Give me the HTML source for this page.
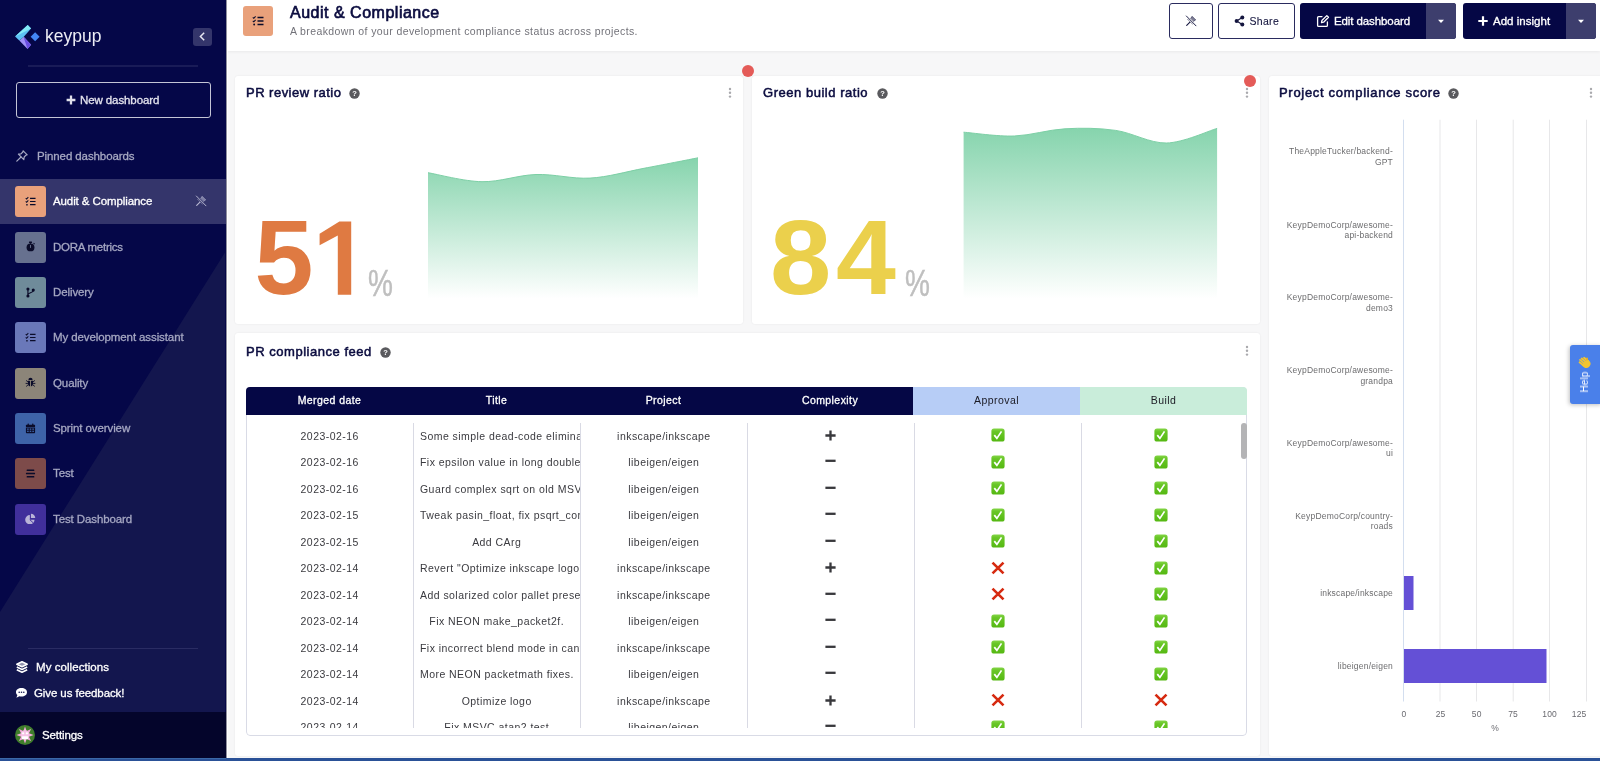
<!DOCTYPE html>
<html><head><meta charset="utf-8">
<style>
*{box-sizing:border-box;margin:0;padding:0}
html,body{width:1600px;height:761px;overflow:hidden;background:#f7f7f8;font-family:"Liberation Sans",sans-serif;}
.abs{position:absolute}
#side,#hdr,.card,#helptxt{will-change:transform}
#side{position:absolute;left:0;top:0;width:226px;height:758px;background:#050748;overflow:hidden}
#side .tri{position:absolute;left:0;top:0;width:225px;height:712px;background:#13164e;clip-path:polygon(225px 252.500px,225px 712px,0 712px,0 612px)}
#side .edge{position:absolute;left:225px;top:0;width:1px;height:758px;background:#03042e}
#strip{position:absolute;left:226px;top:0;width:2px;height:758px;background:#fff;border-left:1px solid rgba(8,8,40,.45);z-index:5}
#bbar{position:absolute;left:0;top:758px;width:1600px;height:3px;background:#2a5197}
#hdr{position:absolute;left:226px;top:0;width:1374px;height:51px;background:#fff;box-shadow:0 1px 3px rgba(0,0,0,.06)}
.card{position:absolute;background:#fff;border-radius:3px;box-shadow:0 0 2px rgba(0,0,0,.08)}
.ctitle{position:absolute;font-weight:normal;-webkit-text-stroke:0.5px #0b0c3f;font-size:13px;color:#0b0c3f;white-space:nowrap}
.t{position:absolute;white-space:nowrap;font-size:11.5px;-webkit-text-stroke:0.3px;letter-spacing:-0.1px}
.big{font-size:106px;font-weight:bold;line-height:116.6px;-webkit-text-stroke:0;letter-spacing:0}
.pct{font-size:37px;color:#bfbfbf;line-height:40.7px;-webkit-text-stroke:0.5px #bfbfbf;letter-spacing:0;transform:scaleX(0.757);transform-origin:0 0}
.th{font-size:10.5px;line-height:14px;letter-spacing:0.43px;-webkit-text-stroke:0.3px}
.td{font-size:10.5px;color:#3a3a3f;line-height:14px;-webkit-text-stroke:0;letter-spacing:0.45px}
.yl{font-size:8.5px;color:#6c6c6e;line-height:10.5px;-webkit-text-stroke:0;letter-spacing:0.2px}
.xl{font-size:8.5px;color:#6a6a70;line-height:12px;-webkit-text-stroke:0;letter-spacing:0.1px}
</style></head><body>
<div id="side">
<div class="tri"></div>
<!-- logo -->
<svg class="abs" style="left:14px;top:23px" width="28" height="28" viewBox="0 0 28 28">
<polygon points="5.300,17.600 9.800,13.800 17.100,21.650 13.500,25.900" fill="#a092f6"/>
<polygon points="9.600,13.900 17.100,21.650 13.500,25.900" fill="#6a4de0"/>
<polygon points="1.100,13.500 13.700,1.900 17.100,5.400 9.800,13.800 5.300,17.600" fill="#5cc0f5"/>
<polygon points="1.100,13.500 13.700,1.900 17.100,5.400" fill="#83eaf7"/>
<polygon points="16.600,13.800 21.100,9.300 25.600,13.800 21.100,18.300" fill="#4486f5"/>
</svg>
<div class="t" id="logot" style="left:45px;top:25.300px;font-size:17.500px;color:#ececf4;letter-spacing:0;line-height:22px;-webkit-text-stroke:0">keypup</div>
<div class="abs" style="left:193px;top:27.500px;width:19px;height:18.500px;border-radius:3px;background:#34356b"></div>
<svg class="abs" style="left:193px;top:27px" width="19" height="19" viewBox="0 0 19 19"><path d="M11.2 5.8 L7.4 9.5 L11.2 13.2" fill="none" stroke="#e8e8f2" stroke-width="1.5"/></svg>
<div class="abs" style="left:28px;top:65px;width:170px;height:2px;background:#191b57"></div>
<!-- new dashboard -->
<div class="abs" style="left:16px;top:82px;width:195px;height:36px;border:1px solid #c4c5d6;border-radius:3px"></div>
<svg class="abs" style="left:66px;top:95px" width="10" height="10" viewBox="0 0 10 10"><path d="M5 .6V9.400M.6 5H9.400" stroke="#e0e0ea" stroke-width="2.300"/></svg>
<div class="t" id="newd" style="left:80px;top:93px;color:#e4e4ee;line-height:14px">New dashboard</div>
<!-- pinned -->
<svg class="abs" style="left:15px;top:149px" width="14" height="14" viewBox="0 0 14 14"><g fill="none" stroke="#a8aac4" stroke-width="1.2" stroke-linejoin="round" stroke-linecap="round"><path d="M8.2 1.8 L12.2 5.8 L11 6.2 L9.2 8 L8.8 10.6 L3.4 5.2 L6 4.8 L7.8 3 Z"/><path d="M6 8 L1.8 12.2"/></g></svg>
<div class="t" id="pinned" style="left:37px;top:149px;color:#a6a8c2;line-height:14px">Pinned dashboards</div>
<!-- active row -->
<div class="abs" style="left:0;top:179px;width:226px;height:45px;background:#34356b"></div>
<div class="abs" style="left:15px;top:186.2px;width:31px;height:31px;border-radius:3px;background:#e9a17b"></div>
<svg class="abs" style="left:24.600px;top:195.8px" width="11" height="11" viewBox="0 0 12 12"><g stroke="#0b0c2a" stroke-width="1.3" fill="none"><path d="M5.500 2.500H11.500M5.500 6H11.500M5.500 9.500H11.500"/><path d="M.8 2.300 L1.800 3.300 L3.600 1.300" stroke-width="1.100"/><path d="M.8 5.800 L1.800 6.800 L3.600 4.800" stroke-width="1.100"/></g><rect x="1.200" y="8.600" width="1.900" height="1.900" rx=".9" fill="#0b0c2a"/></svg>
<div class="t sitem" style="left:53px;top:194px;color:#fff;line-height:14px">Audit &amp; Compliance</div>
<div class="abs" style="left:15px;top:231.7px;width:31px;height:31px;border-radius:3px;background:#67718f"></div>
<svg class="abs" style="left:24.600px;top:241.3px" width="11" height="11" viewBox="0 0 12 12"><circle cx="6" cy="7" r="4.300" fill="#0b0c2a"/><rect x="4.300" y=".6" width="3.400" height="1.500" rx=".4" fill="#0b0c2a"/><rect x="5.400" y="1.500" width="1.200" height="1.600" fill="#0b0c2a"/><rect x="5.500" y="4.300" width="1" height="3.200" fill="#67718f"/><rect x="9" y="2.300" width="1.800" height="1" transform="rotate(45 9.9 2.800)" fill="#0b0c2a"/></svg>
<div class="t sitem" style="left:53px;top:239.5px;color:#a5a7c2;line-height:14px;letter-spacing:-0.26px">DORA metrics</div>
<div class="abs" style="left:15px;top:277.2px;width:31px;height:31px;border-radius:3px;background:#6f8b9a"></div>
<svg class="abs" style="left:24.600px;top:286.8px" width="11" height="11" viewBox="0 0 12 12"><g fill="#0b0c2a"><circle cx="3.200" cy="2.200" r="1.700"/><circle cx="3.200" cy="9.800" r="1.700"/><circle cx="9" cy="3.400" r="1.700"/></g><path d="M3.200 2.500V9.500M9 3.800C9 6.600 3.200 6 3.200 8.500" stroke="#0b0c2a" stroke-width="1.300" fill="none"/></svg>
<div class="t sitem" style="left:53px;top:285px;color:#a5a7c2;line-height:14px">Delivery</div>
<div class="abs" style="left:15px;top:322.2px;width:31px;height:31px;border-radius:3px;background:#6a78b9"></div>
<svg class="abs" style="left:24.600px;top:331.8px" width="11" height="11" viewBox="0 0 12 12"><g stroke="#0b0c2a" stroke-width="1.3" fill="none"><path d="M5.500 2.500H11.500M5.500 6H11.500M5.500 9.500H11.500"/><path d="M.8 2.300 L1.800 3.300 L3.600 1.300" stroke-width="1.100"/><path d="M.8 5.800 L1.800 6.800 L3.600 4.800" stroke-width="1.100"/></g><rect x="1.200" y="8.600" width="1.900" height="1.900" rx=".9" fill="#0b0c2a"/></svg>
<div class="t sitem" style="left:53px;top:330px;color:#a5a7c2;line-height:14px">My development assistant</div>
<div class="abs" style="left:15px;top:367.7px;width:31px;height:31px;border-radius:3px;background:#8c8579"></div>
<svg class="abs" style="left:24.600px;top:377.3px" width="11" height="11" viewBox="0 0 12 12"><g fill="#0b0c2a"><path d="M3.700 3.200a2.300 2.300 0 0 1 4.600 0z"/><path d="M3.200 4h2.300v6.300a3 3 0 0 1-2.300-3z"/><path d="M8.800 4H6.500v6.300a3 3 0 0 0 2.300-3z"/></g><g stroke="#0b0c2a" stroke-width="1" fill="none"><path d="M3.200 5.200L1.200 3.800M3.200 7H.7M3.300 8.600L1.300 10.300M8.800 5.200L10.800 3.800M8.800 7H11.300M8.700 8.600L10.700 10.300"/></g></svg>
<div class="t sitem" style="left:53px;top:375.5px;color:#a5a7c2;line-height:14px">Quality</div>
<div class="abs" style="left:15px;top:413.2px;width:31px;height:31px;border-radius:3px;background:#3e63a8"></div>
<svg class="abs" style="left:24.600px;top:422.8px" width="11" height="11" viewBox="0 0 12 12"><g fill="#0b0c2a"><rect x="1" y="2" width="10" height="2.300" rx=".6"/><rect x="2.800" y=".6" width="1.400" height="2.400" rx=".4"/><rect x="7.800" y=".6" width="1.400" height="2.400" rx=".4"/><path d="M1 5h10v5.400a.8.800 0 0 1-.8.800H1.800a.8.800 0 0 1-.8-.8z"/></g><g fill="#3e63a8"><rect x="2.300" y="6" width="1.700" height="1.400"/><rect x="5.150" y="6" width="1.700" height="1.400"/><rect x="8" y="6" width="1.700" height="1.400"/><rect x="2.300" y="8.400" width="1.700" height="1.400"/><rect x="5.150" y="8.400" width="1.700" height="1.400"/><rect x="8" y="8.400" width="1.700" height="1.400"/></g></svg>
<div class="t sitem" style="left:53px;top:421px;color:#a5a7c2;line-height:14px">Sprint overview</div>
<div class="abs" style="left:15px;top:458.2px;width:31px;height:31px;border-radius:3px;background:#7d4b4a"></div>
<svg class="abs" style="left:24.600px;top:467.8px" width="11" height="11" viewBox="0 0 12 12"><g fill="#0b0c2a"><rect x="1.800" y="1.600" width="8.400" height="1.800" rx=".6"/><rect x="1" y="5.100" width="10" height="1.800" rx=".6"/><rect x="1.800" y="8.600" width="8.400" height="1.800" rx=".6"/></g></svg>
<div class="t sitem" style="left:53px;top:466px;color:#a5a7c2;line-height:14px">Test</div>
<div class="abs" style="left:15px;top:503.7px;width:31px;height:31px;border-radius:3px;background:#402f9b"></div>
<svg class="abs" style="left:24.600px;top:513.3px" width="11" height="11" viewBox="0 0 12 12"><g fill="#b9b4d8"><path d="M5.300 1.600V6.700H10.400A5.100 5.100 0 1 1 5.300 1.600z" transform="translate(0 .6)"/><path d="M6.500.8A4.700 4.700 0 0 1 11.200 5.500H6.500z"/></g><path d="M5.300 7.300L9 10.800" stroke="#402f9b" stroke-width="1"/></svg>
<div class="t sitem" style="left:53px;top:511.5px;color:#a5a7c2;line-height:14px">Test Dashboard</div>
<svg class="abs" style="left:194.200px;top:194.200px" width="14" height="14" viewBox="0 0 14 14"><g transform="translate(7 7) scale(.86) translate(-7 -7)"><path d="M8.300 1.600 L12.400 5.700 L11.300 6.400 L9.500 7.900 L9.100 10.800 L3.200 4.900 L6.100 4.500 L7.600 2.700 Z" fill="#b9bad3" fill-opacity=".55" stroke="#b9bad3" stroke-width=".7" stroke-linejoin="round"/><path d="M5.800 8.200 L2 12" stroke="#b9bad3" stroke-width="1.300" stroke-linecap="round"/><path d="M1.600 1.200 L12.800 12.600" stroke="#34356b" stroke-width="2.600"/><path d="M1.600 1.200 L12.800 12.600" stroke="#b9bad3" stroke-width="1.100" stroke-linecap="round"/></g></svg>
<div class="abs" style="left:28px;top:647.500px;width:170px;height:1px;background:#2a2c63"></div>
<!-- collections -->
<svg class="abs" style="left:15px;top:660px" width="14" height="14" viewBox="0 0 14 14"><g fill="none" stroke="#fff" stroke-width="1.500" stroke-linejoin="round"><path d="M7 1.800 L12.200 4.300 L7 6.800 L1.800 4.300 Z" fill="#fff" fill-opacity=".55"/><path d="M1.800 7 L7 9.500 L12.200 7"/><path d="M1.800 9.700 L7 12.200 L12.200 9.700"/></g></svg>
<div class="t" id="coll" style="left:36px;top:660px;color:#fff;line-height:14px;letter-spacing:0.06px">My collections</div>
<svg class="abs" style="left:15px;top:687px" width="13" height="12" viewBox="0 0 13 12"><path d="M6.5 1 C3.2 1 1 2.9 1 5.2 C1 6.3 1.5 7.3 2.4 8 L1.4 10.8 L4.4 9.2 C5 9.4 5.7 9.5 6.5 9.5 C9.8 9.5 12 7.6 12 5.2 C12 2.9 9.8 1 6.5 1 Z" fill="#fff"/><circle cx="4.2" cy="5.3" r=".8" fill="#13164f"/><circle cx="6.5" cy="5.3" r=".8" fill="#13164f"/><circle cx="8.8" cy="5.3" r=".8" fill="#13164f"/></svg>
<div class="t" id="feed" style="left:34px;top:686px;color:#fff;line-height:14px">Give us feedback!</div>
<!-- settings -->
<div class="abs" style="left:0;top:712px;width:226px;height:46px;background:#04052b"></div>
<svg class="abs" style="left:14px;top:724px" width="22" height="22" viewBox="0 0 22 22"><circle cx="11" cy="11" r="10" fill="#3f7d2b"/><polygon points="11.00,2.40 12.65,7.03 17.08,4.92 14.97,9.35 19.60,11.00 14.97,12.65 17.08,17.08 12.65,14.97 11.00,19.60 9.35,14.97 4.92,17.08 7.03,12.65 2.40,11.00 7.03,9.35 4.92,4.92 9.35,7.03" fill="#f3a9dc"/><circle cx="11" cy="10.500" r="4.300" fill="#f6c3e6"/><circle cx="9.100" cy="9.300" r="1.150" fill="#fff"/><circle cx="12.900" cy="9.300" r="1.150" fill="#fff"/><rect x="7.800" y="12.200" width="6.400" height="3" rx=".8" fill="#fff"/></svg>
<div class="t" id="sett" style="left:42px;top:728px;color:#fff;line-height:14px">Settings</div>

</div>
<div id="strip"></div>
<div id="hdr">
<div class="abs" style="left:17px;top:6px;width:30px;height:30px;border-radius:3px;background:#e9a17b"></div>
<svg class="abs" style="left:26px;top:15px" width="12" height="12" viewBox="0 0 12 12"><g stroke="#0b0c2a" stroke-width="1.3" fill="none"><path d="M5.500 2.500H11.500M5.500 6H11.500M5.500 9.500H11.500"/><path d="M.8 2.300 L1.800 3.300 L3.600 1.300" stroke-width="1.100"/><path d="M.8 5.800 L1.800 6.800 L3.600 4.800" stroke-width="1.100"/></g><rect x="1.200" y="8.600" width="1.900" height="1.900" rx=".9" fill="#0b0c2a"/></svg>
<div class="t" id="htitle" style="left:64px;top:1.7px;font-size:16px;font-weight:normal;color:#0b0c3f;line-height:22px;-webkit-text-stroke:0.65px #0b0c3f;letter-spacing:0.51px">Audit &amp; Compliance</div>
<div class="t" id="hsub" style="left:64px;top:23.5px;font-size:10.5px;color:#727279;line-height:14px;-webkit-text-stroke:0;letter-spacing:0.39px">A breakdown of your development compliance status across projects.</div>
<!-- buttons -->
<div class="abs" style="left:943px;top:3px;width:44px;height:36px;border:1px solid #2a2b5e;border-radius:3px;background:#fff"></div>
<svg class="abs" style="left:958px;top:14.200px" width="14" height="14" viewBox="0 0 14 14"><g transform="translate(7 7) scale(.86) translate(-7 -7)"><path d="M8.300 1.600 L12.400 5.700 L11.300 6.400 L9.500 7.900 L9.100 10.800 L3.200 4.900 L6.100 4.500 L7.600 2.700 Z" fill="#15163f" fill-opacity=".55" stroke="#15163f" stroke-width=".7" stroke-linejoin="round"/><path d="M5.800 8.200 L2 12" stroke="#15163f" stroke-width="1.300" stroke-linecap="round"/><path d="M1.600 1.200 L12.800 12.600" stroke="#fff" stroke-width="2.600"/><path d="M1.600 1.200 L12.800 12.600" stroke="#15163f" stroke-width="1.100" stroke-linecap="round"/></g></svg>
<div class="abs" style="left:992px;top:3px;width:77px;height:36px;border:1px solid #2a2b5e;border-radius:3px;background:#fff"></div>
<svg class="abs" style="left:1008px;top:15px" width="11" height="12" viewBox="0 0 11 12"><g fill="#15163f"><circle cx="8.300" cy="2.400" r="2"/><circle cx="2.600" cy="6" r="2"/><circle cx="8.300" cy="9.600" r="2"/></g><path d="M8.300 2.400L2.600 6L8.300 9.600" stroke="#15163f" stroke-width="1.200" fill="none"/></svg>
<div class="t" id="share" style="left:1023.400px;top:14.300px;color:#15163f;line-height:14px;-webkit-text-stroke:0.1px;font-size:10.500px;letter-spacing:0.35px">Share</div>
<div class="abs" style="left:1074px;top:3px;width:156px;height:36px;border-radius:3px;background:#050745"></div>
<div class="abs" style="left:1200px;top:3px;width:30px;height:36px;border-radius:0 3px 3px 0;background:#3d3e6d"></div>
<svg class="abs" style="left:1090px;top:14px" width="14" height="14" viewBox="0 0 14 14"><g fill="none" stroke="#fff" stroke-width="1.300" stroke-linejoin="round" stroke-linecap="round"><path d="M6 2.600H2.600a1 1 0 0 0-1 1V11.400a1 1 0 0 0 1 1H10.400a1 1 0 0 0 1-1V8"/><path d="M5.500 8.600 L5.900 6.500 L10.800 1.600 L12.500 3.300 L7.600 8.200 Z"/></g></svg>
<div class="t" id="editd" style="left:1108px;top:14px;color:#fff;line-height:14px">Edit dashboard</div>
<svg class="abs" style="left:1211px;top:19px" width="8" height="5" viewBox="0 0 8 5"><path d="M1 .8H7L4 4Z" fill="#fff"/></svg>
<div class="abs" style="left:1237px;top:3px;width:133px;height:36px;border-radius:3px;background:#050745"></div>
<div class="abs" style="left:1340px;top:3px;width:30px;height:36px;border-radius:0 3px 3px 0;background:#3d3e6d"></div>
<svg class="abs" style="left:1252px;top:16px" width="10" height="10" viewBox="0 0 10 10"><path d="M5 .3V9.700M.3 5H9.700" stroke="#fff" stroke-width="2.200"/></svg>
<div class="t" id="addi" style="left:1267px;top:14px;color:#fff;line-height:14px;letter-spacing:0.02px">Add insight</div>
<svg class="abs" style="left:1351px;top:19px" width="8" height="5" viewBox="0 0 8 5"><path d="M1 .8H7L4 4Z" fill="#fff"/></svg>

</div>
<div class="card" id="c1" style="left:235px;top:76px;width:508px;height:248px"><div class="ctitle" id="t1" style="left:11px;top:8px;line-height:18px;letter-spacing:0.48px">PR review ratio</div><svg class="abs" style="left:113.900px;top:12.300px" width="11" height="11" viewBox="0 0 11 11"><circle cx="5.500" cy="5.500" r="5.200" fill="#5a5a5e"/><text x="5.500" y="8.200" font-family="Liberation Sans" font-weight="bold" font-size="7.500" fill="#fff" text-anchor="middle">?</text></svg><svg class="abs" style="left:493px;top:11px" width="4" height="12" viewBox="0 0 4 12"><g fill="#a9a9ad"><circle cx="2" cy="2" r="1.200"/><circle cx="2" cy="5.800" r="1.200"/><circle cx="2" cy="9.600" r="1.200"/></g></svg>
<div class="t big" style="left:19.4px;top:123.3px;color:#df7a42">5</div>
<svg class="abs" style="left:0;top:0" width="200" height="248"><polygon points="116.2,145.6 116.2,218.8 102.8,218.8 102.8,159.6 84.6,169.2 84.6,157.7 104.4,145.6" fill="#df7a42"/></svg>
<div class="t pct" style="left:132.8px;top:187.5px">%</div>
<svg class="abs" style="left:0;top:0" width="508" height="248"><defs><linearGradient id="g1" x1="0" y1="0" x2="0" y2="1"><stop offset="0" stop-color="#86d4ad"/><stop offset="1" stop-color="#ffffff"/></linearGradient></defs><path d="M193.0,96.7 C202.0,98.2 229.0,105.4 247.0,105.7 C265.0,106.0 283.0,99.1 301.0,98.5 C319.0,97.9 337.0,103.1 355.0,102.1 C373.0,101.1 391.0,95.7 409.0,92.3 C427.0,88.9 454.0,83.6 463.0,81.8 L463.0,222.5 L193.0,222.5 Z" fill="url(#g1)"/><path d="M193.0,96.7 C202.0,98.2 229.0,105.4 247.0,105.7 C265.0,106.0 283.0,99.1 301.0,98.5 C319.0,97.9 337.0,103.1 355.0,102.1 C373.0,101.1 391.0,95.7 409.0,92.3 C427.0,88.9 454.0,83.6 463.0,81.8" fill="none" stroke="#7ccfa5" stroke-width="1"/></svg></div>
<div class="card" id="c2" style="left:752px;top:76px;width:508px;height:248px"><div class="ctitle" id="t2" style="left:11px;top:8px;line-height:18px;letter-spacing:0.53px">Green build ratio</div><svg class="abs" style="left:124.700px;top:12.300px" width="11" height="11" viewBox="0 0 11 11"><circle cx="5.500" cy="5.500" r="5.200" fill="#5a5a5e"/><text x="5.500" y="8.200" font-family="Liberation Sans" font-weight="bold" font-size="7.500" fill="#fff" text-anchor="middle">?</text></svg><svg class="abs" style="left:493px;top:11px" width="4" height="12" viewBox="0 0 4 12"><g fill="#a9a9ad"><circle cx="2" cy="2" r="1.200"/><circle cx="2" cy="5.800" r="1.200"/><circle cx="2" cy="9.600" r="1.200"/></g></svg>
<div class="t big" style="left:17.8px;top:123.0px;color:#ebd04c;transform:scaleX(1.04);transform-origin:0 0">8</div>
<div class="t big" style="left:84.1px;top:123.3px;color:#ebd04c;transform:scaleX(1.016);transform-origin:0 0">4</div>
<div class="t pct" style="left:152.5px;top:187.5px">%</div>
<svg class="abs" style="left:0;top:0" width="508" height="248"><defs><linearGradient id="g2" x1="0" y1="0" x2="0" y2="1"><stop offset="0" stop-color="#86d4ad"/><stop offset="1" stop-color="#ffffff"/></linearGradient></defs><path d="M211.6,56.2 C220.1,56.8 245.4,60.6 262.3,60.0 C279.2,59.4 296.1,53.7 313.0,52.8 C329.9,51.8 346.8,52.0 363.7,54.4 C380.6,56.8 397.5,67.3 414.4,67.0 C431.3,66.7 456.6,54.8 465.1,52.4 L465.1,222.5 L211.6,222.5 Z" fill="url(#g2)"/><path d="M211.6,56.2 C220.1,56.8 245.4,60.6 262.3,60.0 C279.2,59.4 296.1,53.7 313.0,52.8 C329.9,51.8 346.8,52.0 363.7,54.4 C380.6,56.8 397.5,67.3 414.4,67.0 C431.3,66.7 456.6,54.8 465.1,52.4" fill="none" stroke="#7ccfa5" stroke-width="1"/></svg></div>
<div class="card" id="c3" style="left:235px;top:333px;width:1025px;height:423px"><div class="ctitle" id="t3" style="left:11px;top:10px;line-height:18px;letter-spacing:0.53px">PR compliance feed</div><svg class="abs" style="left:145.2px;top:13.7px" width="11" height="11" viewBox="0 0 11 11"><circle cx="5.500" cy="5.500" r="5.200" fill="#5a5a5e"/><text x="5.500" y="8.200" font-family="Liberation Sans" font-weight="bold" font-size="7.500" fill="#fff" text-anchor="middle">?</text></svg><svg class="abs" style="left:1009.5px;top:12.4px" width="4" height="12" viewBox="0 0 4 12"><g fill="#a9a9ad"><circle cx="2" cy="2" r="1.200"/><circle cx="2" cy="5.800" r="1.200"/><circle cx="2" cy="9.600" r="1.200"/></g></svg>
<div class="abs" style="left:11px;top:54px;width:1001px;height:349px;border-radius:4px;overflow:hidden" id="tbl"><div class="abs" style="left:0;top:0;width:1001px;height:349px;border:1px solid #d9dbe6;border-radius:4px"></div><div class="abs" style="left:1px;top:1px;width:999px;height:347px">
<div class="abs" style="left:-1px;top:-1px;width:667px;height:28px;background:#050745"></div>
<div class="abs" style="left:666px;top:-1px;width:167px;height:28px;background:#b7cdf6"></div>
<div class="abs" style="left:833px;top:-1px;width:168px;height:28px;background:#c9edda"></div>
<div class="t th" style="left:-1px;top:5.200px;width:167px;text-align:center;color:#fff;">Merged date</div>
<div class="t th" style="left:166px;top:5.200px;width:167px;text-align:center;color:#fff;">Title</div>
<div class="t th" style="left:333px;top:5.200px;width:167px;text-align:center;color:#fff;">Project</div>
<div class="t th" style="left:500px;top:5.200px;width:166px;text-align:center;color:#fff;">Complexity</div>
<div class="t th" style="left:666px;top:5.200px;width:167px;text-align:center;color:#1b1b24;-webkit-text-stroke:0;">Approval</div>
<div class="t th" style="left:833px;top:5.200px;width:167px;text-align:center;color:#1b1b24;-webkit-text-stroke:0;">Build</div>
<div class="abs" style="left:0;top:0;width:999px;height:339.5px;overflow:hidden">
<div class="abs" style="left:165.7px;top:34.5px;width:1px;height:320px;background:#d9dae4"></div>
<div class="abs" style="left:332.8px;top:34.5px;width:1px;height:320px;background:#d9dae4"></div>
<div class="abs" style="left:499.9px;top:34.5px;width:1px;height:320px;background:#d9dae4"></div>
<div class="abs" style="left:667.0px;top:34.5px;width:1px;height:320px;background:#d9dae4"></div>
<div class="abs" style="left:834.1px;top:34.5px;width:1px;height:320px;background:#d9dae4"></div>
<div class="t td" style="left:-0.9px;top:40.5px;width:167.100px;text-align:center">2023-02-16</div>
<div class="t td" style="left:166.7px;top:40.5px;width:166.0px;overflow:hidden"><span style="display:inline-block;min-width:100%;box-sizing:border-box;padding:0 6.300px;text-align:center">Some simple dead-code elimination</span></div>
<div class="t td" style="left:333.3px;top:40.5px;width:167.100px;text-align:center">inkscape/inkscape</div>
<div class="abs" style="left:578.3px;top:41.5px"><svg width="11" height="11" viewBox="0 0 11 11" style="display:block"><path d="M5.500 .4V10.600M.4 5.500H10.600" stroke="#38383c" stroke-width="2.300"/></svg></div>
<div class="abs" style="left:743.8px;top:40.0px"><svg width="14" height="14" viewBox="0 0 14 14" style="display:block"><defs><linearGradient id="ck" x1="0" y1="0" x2="0" y2="1"><stop offset="0" stop-color="#84d548"/><stop offset=".25" stop-color="#68c626"/><stop offset="1" stop-color="#55b812"/></linearGradient></defs><rect x=".4" y=".4" width="13.200" height="13.200" rx="2.600" fill="url(#ck)"/><path d="M3.300 7.100 L5.900 10.400 L10.500 3.400" fill="none" stroke="#fff" stroke-width="1.700" stroke-linecap="butt" stroke-linejoin="miter"/></svg></div>
<div class="abs" style="left:906.7px;top:40.0px"><svg width="14" height="14" viewBox="0 0 14 14" style="display:block"><rect x=".4" y=".4" width="13.200" height="13.200" rx="2.600" fill="url(#ck)"/><path d="M3.300 7.100 L5.900 10.400 L10.500 3.400" fill="none" stroke="#fff" stroke-width="1.700" stroke-linecap="butt" stroke-linejoin="miter"/></svg></div>
<div class="t td" style="left:-0.9px;top:67.0px;width:167.100px;text-align:center">2023-02-16</div>
<div class="t td" style="left:166.7px;top:67.0px;width:166.0px;overflow:hidden"><span style="display:inline-block;min-width:100%;box-sizing:border-box;padding:0 6.300px;text-align:center">Fix epsilon value in long double test</span></div>
<div class="t td" style="left:333.3px;top:67.0px;width:167.100px;text-align:center">libeigen/eigen</div>
<div class="abs" style="left:578.3px;top:68.0px"><svg width="11" height="11" viewBox="0 0 11 11" style="display:block"><path d="M.4 4.800H10.600" stroke="#38383c" stroke-width="2.300"/></svg></div>
<div class="abs" style="left:743.8px;top:66.5px"><svg width="14" height="14" viewBox="0 0 14 14" style="display:block"><rect x=".4" y=".4" width="13.200" height="13.200" rx="2.600" fill="url(#ck)"/><path d="M3.300 7.100 L5.900 10.400 L10.500 3.400" fill="none" stroke="#fff" stroke-width="1.700" stroke-linecap="butt" stroke-linejoin="miter"/></svg></div>
<div class="abs" style="left:906.7px;top:66.5px"><svg width="14" height="14" viewBox="0 0 14 14" style="display:block"><rect x=".4" y=".4" width="13.200" height="13.200" rx="2.600" fill="url(#ck)"/><path d="M3.300 7.100 L5.900 10.400 L10.500 3.400" fill="none" stroke="#fff" stroke-width="1.700" stroke-linecap="butt" stroke-linejoin="miter"/></svg></div>
<div class="t td" style="left:-0.9px;top:93.5px;width:167.100px;text-align:center">2023-02-16</div>
<div class="t td" style="left:166.7px;top:93.5px;width:166.0px;overflow:hidden"><span style="display:inline-block;min-width:100%;box-sizing:border-box;padding:0 6.300px;text-align:center">Guard complex sqrt on old MSVC compilers</span></div>
<div class="t td" style="left:333.3px;top:93.5px;width:167.100px;text-align:center">libeigen/eigen</div>
<div class="abs" style="left:578.3px;top:94.5px"><svg width="11" height="11" viewBox="0 0 11 11" style="display:block"><path d="M.4 4.800H10.600" stroke="#38383c" stroke-width="2.300"/></svg></div>
<div class="abs" style="left:743.8px;top:93.0px"><svg width="14" height="14" viewBox="0 0 14 14" style="display:block"><rect x=".4" y=".4" width="13.200" height="13.200" rx="2.600" fill="url(#ck)"/><path d="M3.300 7.100 L5.900 10.400 L10.500 3.400" fill="none" stroke="#fff" stroke-width="1.700" stroke-linecap="butt" stroke-linejoin="miter"/></svg></div>
<div class="abs" style="left:906.7px;top:93.0px"><svg width="14" height="14" viewBox="0 0 14 14" style="display:block"><rect x=".4" y=".4" width="13.200" height="13.200" rx="2.600" fill="url(#ck)"/><path d="M3.300 7.100 L5.900 10.400 L10.500 3.400" fill="none" stroke="#fff" stroke-width="1.700" stroke-linecap="butt" stroke-linejoin="miter"/></svg></div>
<div class="t td" style="left:-0.9px;top:120.0px;width:167.100px;text-align:center">2023-02-15</div>
<div class="t td" style="left:166.7px;top:120.0px;width:166.0px;overflow:hidden"><span style="display:inline-block;min-width:100%;box-sizing:border-box;padding:0 6.300px;text-align:center">Tweak pasin_float, fix psqrt_complex</span></div>
<div class="t td" style="left:333.3px;top:120.0px;width:167.100px;text-align:center">libeigen/eigen</div>
<div class="abs" style="left:578.3px;top:121.0px"><svg width="11" height="11" viewBox="0 0 11 11" style="display:block"><path d="M.4 4.800H10.600" stroke="#38383c" stroke-width="2.300"/></svg></div>
<div class="abs" style="left:743.8px;top:119.5px"><svg width="14" height="14" viewBox="0 0 14 14" style="display:block"><rect x=".4" y=".4" width="13.200" height="13.200" rx="2.600" fill="url(#ck)"/><path d="M3.300 7.100 L5.900 10.400 L10.500 3.400" fill="none" stroke="#fff" stroke-width="1.700" stroke-linecap="butt" stroke-linejoin="miter"/></svg></div>
<div class="abs" style="left:906.7px;top:119.5px"><svg width="14" height="14" viewBox="0 0 14 14" style="display:block"><rect x=".4" y=".4" width="13.200" height="13.200" rx="2.600" fill="url(#ck)"/><path d="M3.300 7.100 L5.900 10.400 L10.500 3.400" fill="none" stroke="#fff" stroke-width="1.700" stroke-linecap="butt" stroke-linejoin="miter"/></svg></div>
<div class="t td" style="left:-0.9px;top:146.5px;width:167.100px;text-align:center">2023-02-15</div>
<div class="t td" style="left:166.7px;top:146.5px;width:166.0px;overflow:hidden"><span style="display:inline-block;min-width:100%;box-sizing:border-box;padding:0 6.300px;text-align:center">Add CArg</span></div>
<div class="t td" style="left:333.3px;top:146.5px;width:167.100px;text-align:center">libeigen/eigen</div>
<div class="abs" style="left:578.3px;top:147.5px"><svg width="11" height="11" viewBox="0 0 11 11" style="display:block"><path d="M.4 4.800H10.600" stroke="#38383c" stroke-width="2.300"/></svg></div>
<div class="abs" style="left:743.8px;top:146.0px"><svg width="14" height="14" viewBox="0 0 14 14" style="display:block"><rect x=".4" y=".4" width="13.200" height="13.200" rx="2.600" fill="url(#ck)"/><path d="M3.300 7.100 L5.900 10.400 L10.500 3.400" fill="none" stroke="#fff" stroke-width="1.700" stroke-linecap="butt" stroke-linejoin="miter"/></svg></div>
<div class="abs" style="left:906.7px;top:146.0px"><svg width="14" height="14" viewBox="0 0 14 14" style="display:block"><rect x=".4" y=".4" width="13.200" height="13.200" rx="2.600" fill="url(#ck)"/><path d="M3.300 7.100 L5.900 10.400 L10.500 3.400" fill="none" stroke="#fff" stroke-width="1.700" stroke-linecap="butt" stroke-linejoin="miter"/></svg></div>
<div class="t td" style="left:-0.9px;top:173.0px;width:167.100px;text-align:center">2023-02-14</div>
<div class="t td" style="left:166.7px;top:173.0px;width:166.0px;overflow:hidden"><span style="display:inline-block;min-width:100%;box-sizing:border-box;padding:0 6.300px;text-align:center">Revert "Optimize inkscape logo"</span></div>
<div class="t td" style="left:333.3px;top:173.0px;width:167.100px;text-align:center">inkscape/inkscape</div>
<div class="abs" style="left:578.3px;top:174.0px"><svg width="11" height="11" viewBox="0 0 11 11" style="display:block"><path d="M5.500 .4V10.600M.4 5.500H10.600" stroke="#38383c" stroke-width="2.300"/></svg></div>
<div class="abs" style="left:743.8px;top:172.5px"><svg width="14" height="14" viewBox="0 0 14 14" style="display:block"><path d="M1.500 1.600 L12.500 12.400 M12.500 1.600 L1.500 12.400" stroke="#d62a10" stroke-width="2.600" stroke-linecap="butt"/></svg></div>
<div class="abs" style="left:906.7px;top:172.5px"><svg width="14" height="14" viewBox="0 0 14 14" style="display:block"><rect x=".4" y=".4" width="13.200" height="13.200" rx="2.600" fill="url(#ck)"/><path d="M3.300 7.100 L5.900 10.400 L10.500 3.400" fill="none" stroke="#fff" stroke-width="1.700" stroke-linecap="butt" stroke-linejoin="miter"/></svg></div>
<div class="t td" style="left:-0.9px;top:199.5px;width:167.100px;text-align:center">2023-02-14</div>
<div class="t td" style="left:166.7px;top:199.5px;width:166.0px;overflow:hidden"><span style="display:inline-block;min-width:100%;box-sizing:border-box;padding:0 6.300px;text-align:center">Add solarized color pallet presets</span></div>
<div class="t td" style="left:333.3px;top:199.5px;width:167.100px;text-align:center">inkscape/inkscape</div>
<div class="abs" style="left:578.3px;top:200.5px"><svg width="11" height="11" viewBox="0 0 11 11" style="display:block"><path d="M.4 4.800H10.600" stroke="#38383c" stroke-width="2.300"/></svg></div>
<div class="abs" style="left:743.8px;top:199.0px"><svg width="14" height="14" viewBox="0 0 14 14" style="display:block"><path d="M1.500 1.600 L12.500 12.400 M12.500 1.600 L1.500 12.400" stroke="#d62a10" stroke-width="2.600" stroke-linecap="butt"/></svg></div>
<div class="abs" style="left:906.7px;top:199.0px"><svg width="14" height="14" viewBox="0 0 14 14" style="display:block"><rect x=".4" y=".4" width="13.200" height="13.200" rx="2.600" fill="url(#ck)"/><path d="M3.300 7.100 L5.900 10.400 L10.500 3.400" fill="none" stroke="#fff" stroke-width="1.700" stroke-linecap="butt" stroke-linejoin="miter"/></svg></div>
<div class="t td" style="left:-0.9px;top:226.0px;width:167.100px;text-align:center">2023-02-14</div>
<div class="t td" style="left:166.7px;top:226.0px;width:166.0px;overflow:hidden"><span style="display:inline-block;min-width:100%;box-sizing:border-box;padding:0 6.300px;text-align:center">Fix NEON make_packet2f.</span></div>
<div class="t td" style="left:333.3px;top:226.0px;width:167.100px;text-align:center">libeigen/eigen</div>
<div class="abs" style="left:578.3px;top:227.0px"><svg width="11" height="11" viewBox="0 0 11 11" style="display:block"><path d="M.4 4.800H10.600" stroke="#38383c" stroke-width="2.300"/></svg></div>
<div class="abs" style="left:743.8px;top:225.5px"><svg width="14" height="14" viewBox="0 0 14 14" style="display:block"><rect x=".4" y=".4" width="13.200" height="13.200" rx="2.600" fill="url(#ck)"/><path d="M3.300 7.100 L5.900 10.400 L10.500 3.400" fill="none" stroke="#fff" stroke-width="1.700" stroke-linecap="butt" stroke-linejoin="miter"/></svg></div>
<div class="abs" style="left:906.7px;top:225.5px"><svg width="14" height="14" viewBox="0 0 14 14" style="display:block"><rect x=".4" y=".4" width="13.200" height="13.200" rx="2.600" fill="url(#ck)"/><path d="M3.300 7.100 L5.900 10.400 L10.500 3.400" fill="none" stroke="#fff" stroke-width="1.700" stroke-linecap="butt" stroke-linejoin="miter"/></svg></div>
<div class="t td" style="left:-0.9px;top:252.5px;width:167.100px;text-align:center">2023-02-14</div>
<div class="t td" style="left:166.7px;top:252.5px;width:166.0px;overflow:hidden"><span style="display:inline-block;min-width:100%;box-sizing:border-box;padding:0 6.300px;text-align:center">Fix incorrect blend mode in canvas</span></div>
<div class="t td" style="left:333.3px;top:252.5px;width:167.100px;text-align:center">inkscape/inkscape</div>
<div class="abs" style="left:578.3px;top:253.5px"><svg width="11" height="11" viewBox="0 0 11 11" style="display:block"><path d="M.4 4.800H10.600" stroke="#38383c" stroke-width="2.300"/></svg></div>
<div class="abs" style="left:743.8px;top:252.0px"><svg width="14" height="14" viewBox="0 0 14 14" style="display:block"><rect x=".4" y=".4" width="13.200" height="13.200" rx="2.600" fill="url(#ck)"/><path d="M3.300 7.100 L5.900 10.400 L10.500 3.400" fill="none" stroke="#fff" stroke-width="1.700" stroke-linecap="butt" stroke-linejoin="miter"/></svg></div>
<div class="abs" style="left:906.7px;top:252.0px"><svg width="14" height="14" viewBox="0 0 14 14" style="display:block"><rect x=".4" y=".4" width="13.200" height="13.200" rx="2.600" fill="url(#ck)"/><path d="M3.300 7.100 L5.900 10.400 L10.500 3.400" fill="none" stroke="#fff" stroke-width="1.700" stroke-linecap="butt" stroke-linejoin="miter"/></svg></div>
<div class="t td" style="left:-0.9px;top:279.0px;width:167.100px;text-align:center">2023-02-14</div>
<div class="t td" style="left:166.7px;top:279.0px;width:166.0px;overflow:hidden"><span style="display:inline-block;min-width:100%;box-sizing:border-box;padding:0 6.300px;text-align:center">More NEON packetmath fixes.</span></div>
<div class="t td" style="left:333.3px;top:279.0px;width:167.100px;text-align:center">libeigen/eigen</div>
<div class="abs" style="left:578.3px;top:280.0px"><svg width="11" height="11" viewBox="0 0 11 11" style="display:block"><path d="M.4 4.800H10.600" stroke="#38383c" stroke-width="2.300"/></svg></div>
<div class="abs" style="left:743.8px;top:278.5px"><svg width="14" height="14" viewBox="0 0 14 14" style="display:block"><rect x=".4" y=".4" width="13.200" height="13.200" rx="2.600" fill="url(#ck)"/><path d="M3.300 7.100 L5.900 10.400 L10.500 3.400" fill="none" stroke="#fff" stroke-width="1.700" stroke-linecap="butt" stroke-linejoin="miter"/></svg></div>
<div class="abs" style="left:906.7px;top:278.5px"><svg width="14" height="14" viewBox="0 0 14 14" style="display:block"><rect x=".4" y=".4" width="13.200" height="13.200" rx="2.600" fill="url(#ck)"/><path d="M3.300 7.100 L5.900 10.400 L10.500 3.400" fill="none" stroke="#fff" stroke-width="1.700" stroke-linecap="butt" stroke-linejoin="miter"/></svg></div>
<div class="t td" style="left:-0.9px;top:305.5px;width:167.100px;text-align:center">2023-02-14</div>
<div class="t td" style="left:166.7px;top:305.5px;width:166.0px;overflow:hidden"><span style="display:inline-block;min-width:100%;box-sizing:border-box;padding:0 6.300px;text-align:center">Optimize logo</span></div>
<div class="t td" style="left:333.3px;top:305.5px;width:167.100px;text-align:center">inkscape/inkscape</div>
<div class="abs" style="left:578.3px;top:306.5px"><svg width="11" height="11" viewBox="0 0 11 11" style="display:block"><path d="M5.500 .4V10.600M.4 5.500H10.600" stroke="#38383c" stroke-width="2.300"/></svg></div>
<div class="abs" style="left:743.8px;top:305.0px"><svg width="14" height="14" viewBox="0 0 14 14" style="display:block"><path d="M1.500 1.600 L12.500 12.400 M12.500 1.600 L1.500 12.400" stroke="#d62a10" stroke-width="2.600" stroke-linecap="butt"/></svg></div>
<div class="abs" style="left:906.7px;top:305.0px"><svg width="14" height="14" viewBox="0 0 14 14" style="display:block"><path d="M1.500 1.600 L12.500 12.400 M12.500 1.600 L1.500 12.400" stroke="#d62a10" stroke-width="2.600" stroke-linecap="butt"/></svg></div>
<div class="t td" style="left:-0.9px;top:332.0px;width:167.100px;text-align:center">2023-02-14</div>
<div class="t td" style="left:166.7px;top:332.0px;width:166.0px;overflow:hidden"><span style="display:inline-block;min-width:100%;box-sizing:border-box;padding:0 6.300px;text-align:center">Fix MSVC atan2 test</span></div>
<div class="t td" style="left:333.3px;top:332.0px;width:167.100px;text-align:center">libeigen/eigen</div>
<div class="abs" style="left:578.3px;top:333.0px"><svg width="11" height="11" viewBox="0 0 11 11" style="display:block"><path d="M.4 4.800H10.600" stroke="#38383c" stroke-width="2.300"/></svg></div>
<div class="abs" style="left:743.8px;top:331.5px"><svg width="14" height="14" viewBox="0 0 14 14" style="display:block"><rect x=".4" y=".4" width="13.200" height="13.200" rx="2.600" fill="url(#ck)"/><path d="M3.300 7.100 L5.900 10.400 L10.500 3.400" fill="none" stroke="#fff" stroke-width="1.700" stroke-linecap="butt" stroke-linejoin="miter"/></svg></div>
<div class="abs" style="left:906.7px;top:331.5px"><svg width="14" height="14" viewBox="0 0 14 14" style="display:block"><rect x=".4" y=".4" width="13.200" height="13.200" rx="2.600" fill="url(#ck)"/><path d="M3.300 7.100 L5.900 10.400 L10.500 3.400" fill="none" stroke="#fff" stroke-width="1.700" stroke-linecap="butt" stroke-linejoin="miter"/></svg></div>
</div>
<div class="abs" style="left:993.8px;top:35.3px;width:6px;height:36px;border-radius:3px;background:#b4b4b6"></div>
</div></div></div>
<div class="card" id="c4" style="left:1269px;top:76px;width:340px;height:680px"><div class="ctitle" id="t4" style="left:10px;top:8px;line-height:18px;letter-spacing:0.69px">Project compliance score</div><svg class="abs" style="left:179px;top:12px" width="11" height="11" viewBox="0 0 11 11"><circle cx="5.500" cy="5.500" r="5.200" fill="#5a5a5e"/><text x="5.500" y="8.200" font-family="Liberation Sans" font-weight="bold" font-size="7.500" fill="#fff" text-anchor="middle">?</text></svg><svg class="abs" style="left:320px;top:11px" width="4" height="12" viewBox="0 0 4 12"><g fill="#a9a9ad"><circle cx="2" cy="2" r="1.200"/><circle cx="2" cy="5.800" r="1.200"/><circle cx="2" cy="9.600" r="1.200"/></g></svg>
<svg class="abs" style="left:0;top:0" width="340" height="680"><rect x="134" y="43.7" width="1" height="581.8" fill="#d3deef"/><rect x="170.5" y="43.7" width="1" height="581.8" fill="#e7e7e9"/><rect x="207.0" y="43.7" width="1" height="581.8" fill="#e7e7e9"/><rect x="243.7" y="43.7" width="1" height="581.8" fill="#e7e7e9"/><rect x="280.0" y="43.7" width="1" height="581.8" fill="#e7e7e9"/><rect x="317.0" y="43.7" width="1" height="581.8" fill="#e7e7e9"/><rect x="135" y="500" width="9.500" height="34" fill="#6450d6"/><rect x="135" y="573" width="142.500" height="34" fill="#6450d6"/></svg>
<div class="t yl" style="left:0;top:70.46px;width:124px;text-align:right">TheAppleTucker/backend-<br>GPT</div>
<div class="t yl" style="left:0;top:143.96px;width:124px;text-align:right">KeypDemoCorp/awesome-<br>api-backend</div>
<div class="t yl" style="left:0;top:216.46px;width:124px;text-align:right">KeypDemoCorp/awesome-<br>demo3</div>
<div class="t yl" style="left:0;top:289.46px;width:124px;text-align:right">KeypDemoCorp/awesome-<br>grandpa</div>
<div class="t yl" style="left:0;top:361.96px;width:124px;text-align:right">KeypDemoCorp/awesome-<br>ui</div>
<div class="t yl" style="left:0;top:434.96px;width:124px;text-align:right">KeypDemoCorp/country-<br>roads</div>
<div class="t yl" style="left:0;top:512.2px;width:124px;text-align:right">inkscape/inkscape</div>
<div class="t yl" style="left:0;top:584.7px;width:124px;text-align:right">libeigen/eigen</div>
<div class="t xl" style="left:115px;top:631.5px;width:40px;text-align:center">0</div>
<div class="t xl" style="left:151.5px;top:631.5px;width:40px;text-align:center">25</div>
<div class="t xl" style="left:187.70000000000005px;top:631.5px;width:40px;text-align:center">50</div>
<div class="t xl" style="left:224.0999999999999px;top:631.5px;width:40px;text-align:center">75</div>
<div class="t xl" style="left:260.5999999999999px;top:631.5px;width:40px;text-align:center">100</div>
<div class="t xl" style="left:290.0999999999999px;top:631.5px;width:40px;text-align:center">125</div>
<div class="t xl" style="left:206px;top:646.2px;width:40px;text-align:center">%</div></div>
<div class="abs" style="left:741.500px;top:64.500px;width:12px;height:12px;border-radius:6px;background:#e45b58"></div><div class="abs" style="left:1244.200px;top:75.300px;width:12px;height:12px;border-radius:6px;background:#e45b58"></div>
<div class="abs" id="helptab" style="left:1570px;top:344.500px;width:32px;height:59.500px;border-radius:3px 0 0 3px;background:#4a80ea;box-shadow:-1px 1px 4px rgba(0,0,0,.25)"></div>
<div class="t" id="helptxt" style="left:1585px;top:381.700px;width:0;height:0;color:#fff;line-height:0;-webkit-text-stroke:0.2px"><div style="position:absolute;left:0;top:0;transform:translate(-50%,-50%) rotate(-90deg);line-height:12px;font-size:10px;letter-spacing:0.1px;-webkit-text-stroke:0">Help</div></div>
<svg class="abs" style="left:1578px;top:355px" width="13" height="14" viewBox="0 0 13 14"><g transform="rotate(-50 6.5 7)"><rect x="2.200" y="2.500" width="1.900" height="7" rx=".9" fill="#f2c430"/><rect x="4.300" y="1.300" width="1.900" height="8" rx=".9" fill="#f2c430"/><rect x="6.400" y="1.700" width="1.900" height="8" rx=".9" fill="#f2c430"/><rect x="8.500" y="3" width="1.900" height="7" rx=".9" fill="#f2c430"/><path d="M2.200 7 H10.400 V9.500 A4 4 0 0 1 2.200 9.500 Z" fill="#f2c430"/><rect x="9.300" y="7" width="3" height="1.900" rx=".9" transform="rotate(-40 9.300 8)" fill="#e8b020"/></g></svg>
<!--OVER-->
<div id="bbar"></div><div class="abs" style="left:0;top:758px;width:226px;height:1px;background:#3b68a7"></div>
</body></html>
